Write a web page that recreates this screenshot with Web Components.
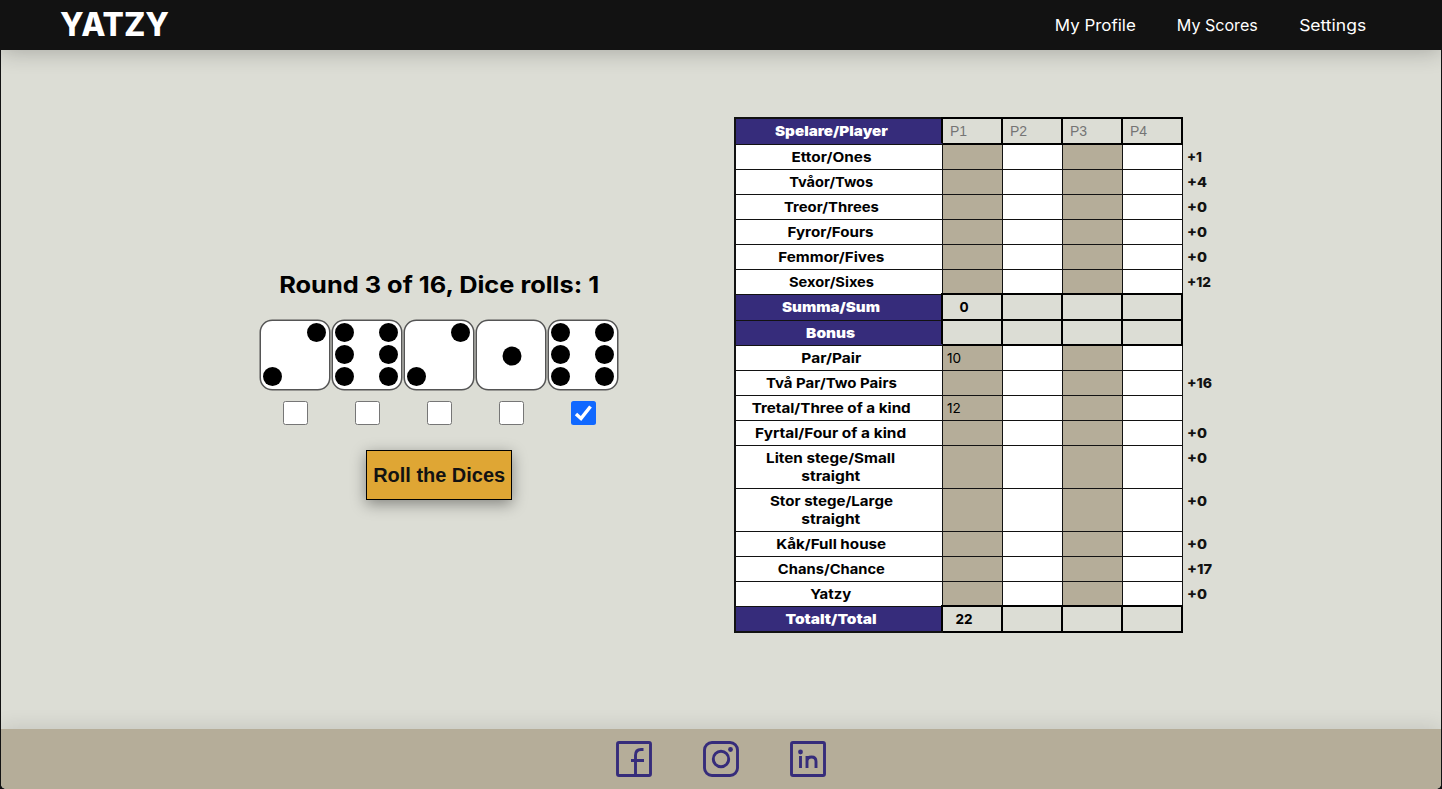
<!DOCTYPE html>
<html lang="en">
<head>
<meta charset="utf-8">
<title>Yatzy</title>
<style>
html,body{margin:0;height:100%;overflow:hidden;background:#121212}
body{font-family:Inter,"Open Sans","Liberation Sans",sans-serif;color:#000;
--paper:#dcddd5;--sand:#b5ad99;--violet:#362c7b;--ink:#121212}
</style>
</head>
<body>
<yatzy-app></yatzy-app>
<script>
const define=(name,css,html,after)=>customElements.define(name,class extends HTMLElement{
  connectedCallback(){
    if(this.shadowRoot)return;
    const root=this.attachShadow({mode:"open"});
    root.innerHTML=`<style>*{box-sizing:border-box}${css}</style>`+(typeof html==="function"?html(this):html);
    if(after)after(this,root);
  }
});

/* One line of text, stretched to a given width in pixels */
define("fit-text",`:host{display:inline-block;white-space:nowrap;transform-origin:var(--origin,50%) 50%}`,"<slot></slot>",el=>{
  const target=+el.getAttribute("w"),natural=el.offsetWidth;
  if(target&&natural)el.style.transform=`scaleX(${target/el.getBoundingClientRect().width})`;
});

define("top-bar",`:host{display:flex;align-items:center;justify-content:space-between;height:50px;background:var(--ink);color:#fff;padding:0 75px 0 59px;position:relative;box-shadow:0 2px 22px rgba(0,0,0,.24)}
h1{margin:0;font-size:32px;font-weight:800;line-height:52px}
nav{display:flex;gap:42px;font-size:16px;line-height:50px}nav a{color:#fff;display:flex;justify-content:center}`,
`<h1><fit-text w="109" style="--origin:0">YATZY</fit-text></h1>
<nav><a style="width:80px"><fit-text w="81">My Profile</fit-text></a><a style="width:80px"><fit-text w="81">My Scores</fit-text></a><a style="width:67px"><fit-text w="67">Settings</fit-text></a></nav>`);

const pips={1:[[36,36]],2:[[56.5,12.5],[12.5,56.5]],6:[[12.5,12.5],[12.5,34.5],[12.5,56.5],[56.5,12.5],[56.5,34.5],[56.5,56.5]]};
define("dice-slot",`:host{display:flex;flex-direction:column;align-items:center;width:72px}
svg{display:block}
.box{width:25px;height:24px;margin-top:10px;border:1px solid #767676;border-radius:2.5px;background:#fff}
.box.on{border:0;background:#1068ff}`,
el=>`<svg width="72" height="72" viewBox="-1 -1 72 72"><rect x="0.25" y="0.25" width="69.5" height="69.5" rx="12" fill="#fff" stroke="#555" stroke-width="1.5"/>${pips[el.getAttribute("value")].map(([x,y])=>`<circle cx="${x}" cy="${y}" r="9.5"/>`).join("")}</svg>
<div class="box${el.hasAttribute("held")?" on":""}">${el.hasAttribute("held")?'<svg width="25" height="24" viewBox="0 0 25 24"><path d="M5 13L10 17.5L19.5 5.5" fill="none" stroke="#fff" stroke-width="3.5"/></svg>':""}</div>`);

define("roll-button",`:host{display:block}
button{display:block;width:146px;height:50px;padding:0;border:1px solid #000;background:#dfa634;color:#121212;font:bold 20px/46px "Liberation Sans",Arial,sans-serif;box-shadow:0 4px 14px rgba(0,0,0,.4);white-space:nowrap}
fit-text{margin-top:-2px}`,
`<button><fit-text w="132"><slot></slot></fit-text></button>`);

define("dice-panel",`:host{display:flex;flex-direction:column;align-items:center;width:360px;margin-top:220px}
h2{margin:0;font-size:23.2px;line-height:30px;font-weight:700}
.dice{display:flex;margin-top:19px}roll-button{margin-top:25px}`,
`<h2><fit-text w="320">Round 3 of 16, Dice rolls: 1</fit-text></h2>
<div class="dice"><dice-slot value="2"></dice-slot><dice-slot value="6"></dice-slot><dice-slot value="2"></dice-slot><dice-slot value="1"></dice-slot><dice-slot value="6" held></dice-slot></div>
<roll-button>Roll the Dices</roll-button>`);

/* A row: label, four player cells, and the points on offer beside them */
define("score-row",`:host{display:grid;grid-template-columns:209px repeat(4,60px) 60px;height:var(--h,25px);font-size:13.6px;line-height:18px}
.label{border:solid var(--ink);border-width:0 1px 1px 2px;background:#fff;font-weight:700;padding:3px 19px 0 3px;display:flex;flex-direction:column;align-items:center}
.cell{border:solid var(--ink);border-width:0 1px 1px 0;background:#fff;padding:3px 0 0 4px;font-weight:400}
.cell.odd{background:var(--sand)}
.hint{padding:3px 0 0 4px;font-weight:800;color:var(--ink);--origin:0}
:host([kind]) .label{background:var(--violet);color:#fff;font-weight:900}
:host([kind]) .cell{background:var(--paper);border-color:#000;position:relative;font-weight:700;text-align:center;padding-right:21px;box-shadow:inset -1px -1px #000,-2px -2px #000,0 -2px #000}
:host([kind=head]){padding-top:2px}
:host([kind=head]) .label{margin-top:-2px;border-top-width:2px}
:host([kind=head]) .cell{font:400 14px/18px "Liberation Sans",Arial,sans-serif;color:#757575;text-align:left;padding-left:7px}
:host([kind=total]) .label{border-bottom-width:2px}
:host([kind=sum]) .cell,:host([kind=total]) .cell{z-index:1}`,
el=>{
  const {label,cells=[],hint}=el.data;
  return `<div class="label">${label.map(([t,w])=>`<fit-text w="${w}">${t}</fit-text>`).join("")}</div>`+
  [0,1,2,3].map(i=>`<div class="cell ${i%2?"":"odd"}">${cells[i]||""}</div>`).join("")+
  `<div class="hint">${hint?`<fit-text w="${hint[1]}">${hint[0]}</fit-text>`:""}</div>`;
});

const rows=[
{kind:"head",h:28,label:[["Spelare/Player",113]],cells:["P1","P2","P3","P4"]},
{label:[["Ettor/Ones",80]],hint:["+1",15]},
{label:[["Tvåor/Twos",84]],hint:["+4",20]},
{label:[["Treor/Threes",95]],hint:["+0",20]},
{label:[["Fyror/Fours",86]],hint:["+0",20]},
{label:[["Femmor/Fives",106]],hint:["+0",20]},
{label:[["Sexor/Sixes",85]],hint:["+12",24]},
{kind:"sum",h:26,label:[["Summa/Sum",98]],cells:["0"]},
{kind:"bonus",label:[["Bonus",49]]},
{label:[["Par/Pair",60]],cells:["10"]},
{label:[["Två Par/Two Pairs",131]],hint:["+16",25]},
{label:[["Tretal/Three of a kind",159]],cells:["12"]},
{label:[["Fyrtal/Four of a kind",151]],hint:["+0",20]},
{h:43,label:[["Liten stege/Small",129],["straight",59]],hint:["+0",20]},
{h:43,label:[["Stor stege/Large",123],["straight",59]],hint:["+0",20]},
{label:[["Kåk/Full house",110]],hint:["+0",20]},
{label:[["Chans/Chance",107]],hint:["+17",25]},
{label:[["Yatzy",41]],hint:["+0",20]},
{kind:"total",h:26,label:[["Totalt/Total",91]],cells:["22"]}];
define("score-card",`:host{display:block;margin-top:67px}`,"",(el,root)=>{
  for(const data of rows){
    const row=document.createElement("score-row");
    row.data=data;
    if(data.kind)row.setAttribute("kind",data.kind);
    if(data.h)row.style.setProperty("--h",data.h+"px");
    root.append(row);
  }
});

const icons={
facebook:'<rect x="1.5" y="1.5" width="33" height="33" rx="1.5"/><path d="M19.5 34V14.5q0-6 5.5-6h2.5M15 19.5h13"/>',
instagram:'<rect x="1.5" y="1.5" width="33" height="33" rx="7.5"/><circle cx="18" cy="18" r="7.7"/><circle cx="27.5" cy="8.5" r="2.4" fill="#362c7b" stroke="none"/>',
linkedin:'<rect x="1.5" y="1.5" width="33" height="33" rx="1.5"/><path d="M10.5 15v12M17 27V15M17 20.5q0-4.5 4.5-4.5T26 20.5V27"/><circle cx="10.5" cy="11" r="2.4" fill="#362c7b" stroke="none"/>'};
define("social-icon",`:host{display:block;width:36px;height:36px}svg{display:block;fill:none;stroke:var(--violet);stroke-width:2.9}`,
el=>`<svg width="36" height="36" viewBox="0 0 36 36">${icons[el.getAttribute("name")]}</svg>`);

define("page-footer",`:host{display:flex;justify-content:center;gap:51px;height:60px;padding-top:12px;background:var(--sand);position:relative;box-shadow:0 -2px 20px rgba(0,0,0,.11);border-radius:0 0 5px 5px}`,
`<social-icon name="facebook"></social-icon><social-icon name="instagram"></social-icon><social-icon name="linkedin"></social-icon>`);

define("yatzy-app",`:host{display:grid;grid-template-rows:50px 1fr 60px;height:789px;margin:0 1px;overflow:hidden;background:var(--paper);border-radius:0 0 5px 5px}
main{display:flex;align-items:flex-start;gap:115px;padding-left:258px}`,
`<top-bar></top-bar><main><dice-panel></dice-panel><score-card></score-card></main><page-footer></page-footer>`);
</script>
</body>
</html>
